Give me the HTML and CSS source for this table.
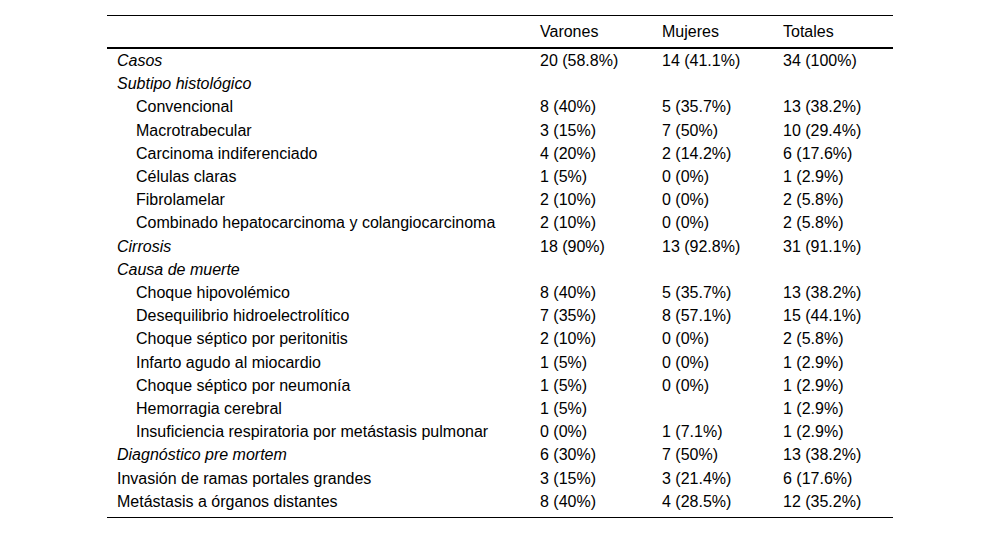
FILE: index.html
```html
<!DOCTYPE html>
<html lang="es">
<head>
<meta charset="utf-8">
<link rel="stylesheet" href="styles.css">
</head>
<body>
<table class="data">
  <colgroup>
    <col class="c-label"><col class="c-num"><col class="c-num"><col class="c-num">
  </colgroup>
  <thead>
    <tr><th></th><th>Varones</th><th>Mujeres</th><th>Totales</th></tr>
  </thead>
  <tbody>
    <tr><td class="it">Casos</td><td>20 (58.8%)</td><td>14 (41.1%)</td><td>34 (100%)</td></tr>
    <tr><td class="it">Subtipo histológico</td><td></td><td></td><td></td></tr>
    <tr><td class="ind">Convencional</td><td>8 (40%)</td><td>5 (35.7%)</td><td>13 (38.2%)</td></tr>
    <tr><td class="ind">Macrotrabecular</td><td>3 (15%)</td><td>7 (50%)</td><td>10 (29.4%)</td></tr>
    <tr><td class="ind">Carcinoma indiferenciado</td><td>4 (20%)</td><td>2 (14.2%)</td><td>6 (17.6%)</td></tr>
    <tr><td class="ind">Células claras</td><td>1 (5%)</td><td>0 (0%)</td><td>1 (2.9%)</td></tr>
    <tr><td class="ind">Fibrolamelar</td><td>2 (10%)</td><td>0 (0%)</td><td>2 (5.8%)</td></tr>
    <tr><td class="ind">Combinado hepatocarcinoma y colangiocarcinoma</td><td>2 (10%)</td><td>0 (0%)</td><td>2 (5.8%)</td></tr>
    <tr><td class="it">Cirrosis</td><td>18 (90%)</td><td>13 (92.8%)</td><td>31 (91.1%)</td></tr>
    <tr><td class="it">Causa de muerte</td><td></td><td></td><td></td></tr>
    <tr><td class="ind">Choque hipovolémico</td><td>8 (40%)</td><td>5 (35.7%)</td><td>13 (38.2%)</td></tr>
    <tr><td class="ind">Desequilibrio hidroelectrolítico</td><td>7 (35%)</td><td>8 (57.1%)</td><td>15 (44.1%)</td></tr>
    <tr><td class="ind">Choque séptico por peritonitis</td><td>2 (10%)</td><td>0 (0%)</td><td>2 (5.8%)</td></tr>
    <tr><td class="ind">Infarto agudo al miocardio</td><td>1 (5%)</td><td>0 (0%)</td><td>1 (2.9%)</td></tr>
    <tr><td class="ind">Choque séptico por neumonía</td><td>1 (5%)</td><td>0 (0%)</td><td>1 (2.9%)</td></tr>
    <tr><td class="ind">Hemorragia cerebral</td><td>1 (5%)</td><td></td><td>1 (2.9%)</td></tr>
    <tr><td class="ind">Insuficiencia respiratoria por metástasis pulmonar</td><td>0 (0%)</td><td>1 (7.1%)</td><td>1 (2.9%)</td></tr>
    <tr><td class="it">Diagnóstico pre mortem</td><td>6 (30%)</td><td>7 (50%)</td><td>13 (38.2%)</td></tr>
    <tr><td>Invasión de ramas portales grandes</td><td>3 (15%)</td><td>3 (21.4%)</td><td>6 (17.6%)</td></tr>
    <tr class="last"><td>Metástasis a órganos distantes</td><td>8 (40%)</td><td>4 (28.5%)</td><td>12 (35.2%)</td></tr>
  </tbody>
</table>
</body>
</html>
```
FILE: styles.css
```css
html, body {
  margin: 0;
  padding: 0;
  background: #fff;
}
body {
  padding-top: 15px;
  font-family: "Liberation Sans", Arial, sans-serif;
  font-size: 16px;
  color: #000;
}
.data {
  width: 786px;
  margin: 0 auto;
  border-collapse: collapse;
  table-layout: fixed;
  border-top: 1px solid #000;
  border-bottom: 1px solid #000;
}
.c-label { width: 423px; }
.data col.c-num:nth-child(2) { width: 122px; }
.data col.c-num:nth-child(3) { width: 121px; }
.data col.c-num:nth-child(4) { width: 120px; }
.data th {
  font-weight: normal;
  text-align: left;
  padding: 7px 10px 6px;
  line-height: 18px;
  height: 18px;
  border-bottom: 2px solid #000;
}
.data td {
  padding: 3px 10px;
  line-height: 17.2px;
  text-align: left;
  vertical-align: middle;
  white-space: nowrap;
}
.data td.it { font-style: italic; }
.data td.ind { padding-left: 29px; }
.data tr.last td { padding-bottom: 7px; }
```
